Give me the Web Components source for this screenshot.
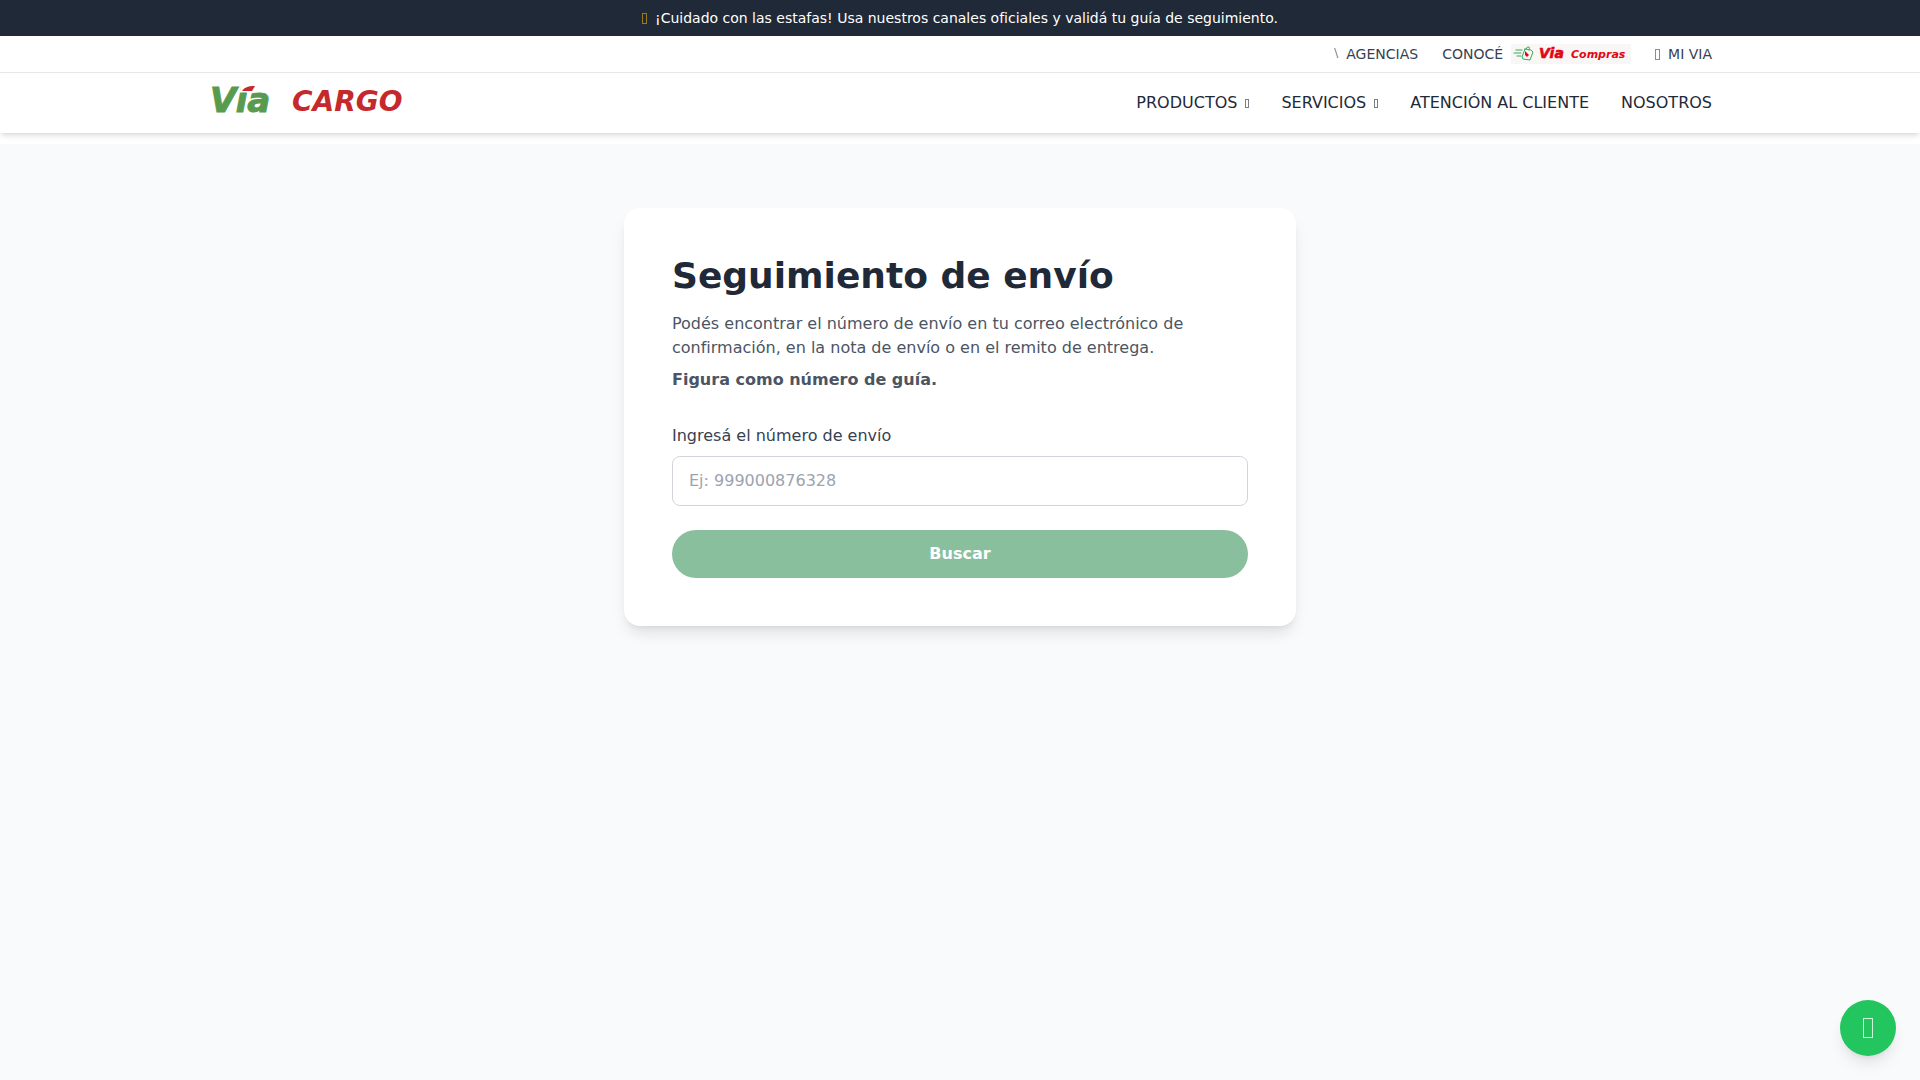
<!DOCTYPE html>
<html lang="es">
<head>
<meta charset="utf-8">
<title>Seguimiento de envío</title>
<style>
  body {
    margin: 0;
    min-height: 100vh;
    background: #f9fafb;
    color: #1f2937;
    font: 16px/24px "DejaVu Sans", sans-serif;
  }
</style>
</head>
<body>
<via-page></via-page>
<script>
const define = (name, html) => customElements.define(name, class extends HTMLElement {
  constructor() {
    super();
    this.attachShadow({ mode: "open" }).innerHTML = html;
  }
});

// Narrow outlined box; --w and --h set its size, the colour follows the text.
define("box-icon", `
  <style>
    :host { display: inline-flex; justify-content: center; width: var(--w, 5px); opacity: .6; }
    i { box-sizing: border-box; flex: none; width: var(--w, 5px); height: var(--h, 11px); border: 1px solid currentColor; }
  </style>
  <i></i>`);

define("alert-bar", `
  <style>
    :host { display: flex; justify-content: center; align-items: center; gap: 8px;
      padding: 8px 16px; background: #1f2937; color: #fff; font-size: 14px; line-height: 20px; }
    box-icon { color: #eab308; }
  </style>
  <box-icon aria-hidden="true"></box-icon>
  <span><slot></slot></span>`);

define("via-cargo-logo", `
  <style>
    :host { display: block; }
    svg { display: block; width: 200px; height: 36px; overflow: visible; }
    text { font-family: "DejaVu Sans", sans-serif; font-weight: 700; font-style: italic; }
  </style>
  <svg viewBox="0 0 200 36" role="img" aria-label="Via Cargo">
    <text x="2" y="27" font-size="34" fill="#589b4f" stroke="#589b4f">Via</text>
    <path d="M33 -1h13v8H32z" fill="#fff"/>
    <path d="M34 6C36 3 39 1 47 1L44 6 34 6Z" fill="#c5292b"/>
    <text x="84" y="26" font-size="28" fill="#c5292b">CARGO</text>
  </svg>`);

define("via-compras-logo", `
  <style>
    :host { display: block; background: #f8f7f6; }
    svg { display: block; width: 120px; height: 20px; overflow: visible; }
    text { font-family: "DejaVu Sans", sans-serif; font-weight: 700; font-style: italic; fill: #e30613; }
  </style>
  <svg viewBox="0 0 120 20" role="img" aria-label="Via Compras">
    <g fill="none" stroke="#37ab5c" stroke-linecap="round">
      <path d="M5 6h6M3 9h7M6 12h4"/>
      <path d="M14 5l6 1 2 2-3 8-7-1-1-2 3-8Z"/>
      <path d="M15 5q1-3 3-2 1 1 0 3"/>
    </g>
    <path d="M14 7l4 4-2 2-2-2Z" fill="#e30613"/>
    <text x="28" y="14" font-size="14" stroke="#e30613" stroke-width=".6">Via</text>
    <text x="60" y="14" font-size="11">Compras</text>
  </svg>`);

define("utility-nav", `
  <style>
    :host { display: block; border-bottom: 1px solid #e5e7eb; font-size: 14px; line-height: 20px; }
    nav { box-sizing: border-box; max-width: 1536px; margin: 0 auto; padding: 8px 16px;
      display: flex; justify-content: flex-end; align-items: center; gap: 24px; }
    a { display: flex; align-items: center; gap: 8px; color: #374151; text-decoration: none; }
    .slash { font-family: "Liberation Serif", serif; }
  </style>
  <nav aria-label="Accesos">
    <a href="#agencias"><span class="slash" aria-hidden="true">\\</span>AGENCIAS</a>
    <a href="#compras">CONOCÉ<via-compras-logo></via-compras-logo></a>
    <a href="#mivia"><box-icon aria-hidden="true"></box-icon>MI VIA</a>
  </nav>`);

define("main-nav", `
  <style>
    :host { display: block; }
    div { box-sizing: border-box; max-width: 1536px; margin: 0 auto; padding: 12px 16px;
      display: flex; justify-content: space-between; align-items: center; }
    nav { display: flex; gap: 32px; }
    a { color: #1f2937; text-decoration: none; display: flex; align-items: center; gap: 8px; }
    box-icon { --w: 4px; --h: 9px; }
  </style>
  <div>
    <a href="#inicio"><via-cargo-logo></via-cargo-logo></a>
    <nav aria-label="Principal">
      <a href="#productos">PRODUCTOS<box-icon aria-hidden="true"></box-icon></a>
      <a href="#servicios">SERVICIOS<box-icon aria-hidden="true"></box-icon></a>
      <a href="#atencion">ATENCIÓN AL CLIENTE</a>
      <a href="#nosotros">NOSOTROS</a>
    </nav>
  </div>`);

define("tracking-card", `
  <style>
    :host { display: block; box-sizing: border-box; width: 100%; max-width: 672px; padding: 48px;
      background: #fff; border-radius: 16px;
      box-shadow: 0 10px 15px -3px rgba(0,0,0,.1), 0 4px 6px -4px rgba(0,0,0,.1); }
    h1 { margin: 0 0 16px; font-size: 36px; line-height: 40px; }
    p { margin: 0 0 8px; color: #4b5563; }
    form { margin-top: 32px; display: flex; flex-direction: column; }
    label { margin-bottom: 8px; color: #374151; }
    input { font: inherit; padding: 12px 16px; border: 1px solid #d1d5db; border-radius: 8px;
      background: #fff; color: #1f2937; margin: 0 0 24px; }
    input::placeholder { color: #9ca3af; opacity: 1; }
    button { font: inherit; font-weight: 700; padding: 12px 16px; border: 0; border-radius: 24px;
      background: #8abf9d; color: #fff; }
  </style>
  <h1>Seguimiento de envío</h1>
  <p>Podés encontrar el número de envío en tu correo electrónico de confirmación, en la nota de envío o en el remito de entrega.</p>
  <p><strong>Figura como número de guía.</strong></p>
  <form>
    <label for="guia">Ingresá el número de envío</label>
    <input id="guia" type="text" placeholder="Ej: 999000876328">
    <button type="button">Buscar</button>
  </form>`);

define("chat-button", `
  <style>
    :host { position: fixed; right: 24px; bottom: 24px; }
    button { display: flex; align-items: center; justify-content: center; width: 56px; height: 56px;
      padding: 0; border: 0; border-radius: 50%; background: #22c55e; color: #fff;
      box-shadow: 0 10px 15px -3px rgba(0,0,0,.1), 0 4px 6px -4px rgba(0,0,0,.1); }
    box-icon { --w: 10px; --h: 20px; opacity: .8; }
  </style>
  <button type="button" aria-label="WhatsApp"><box-icon aria-hidden="true"></box-icon></button>`);

define("via-page", `
  <style>
    :host { display: block; }
    header { background: #fff; box-shadow: 0 4px 6px -1px rgba(0,0,0,.1), 0 2px 4px -2px rgba(0,0,0,.1); }
    .top { background: #fff; padding-bottom: 11px; }
    main { display: flex; justify-content: center; padding: 64px 16px; }
  </style>
  <div class="top">
    <header>
      <alert-bar>¡Cuidado con las estafas! Usa nuestros canales oficiales y validá tu guía de seguimiento.</alert-bar>
      <utility-nav></utility-nav>
      <main-nav></main-nav>
    </header>
  </div>
  <main><tracking-card></tracking-card></main>
  <chat-button></chat-button>`);
</script>
</body>
</html>
